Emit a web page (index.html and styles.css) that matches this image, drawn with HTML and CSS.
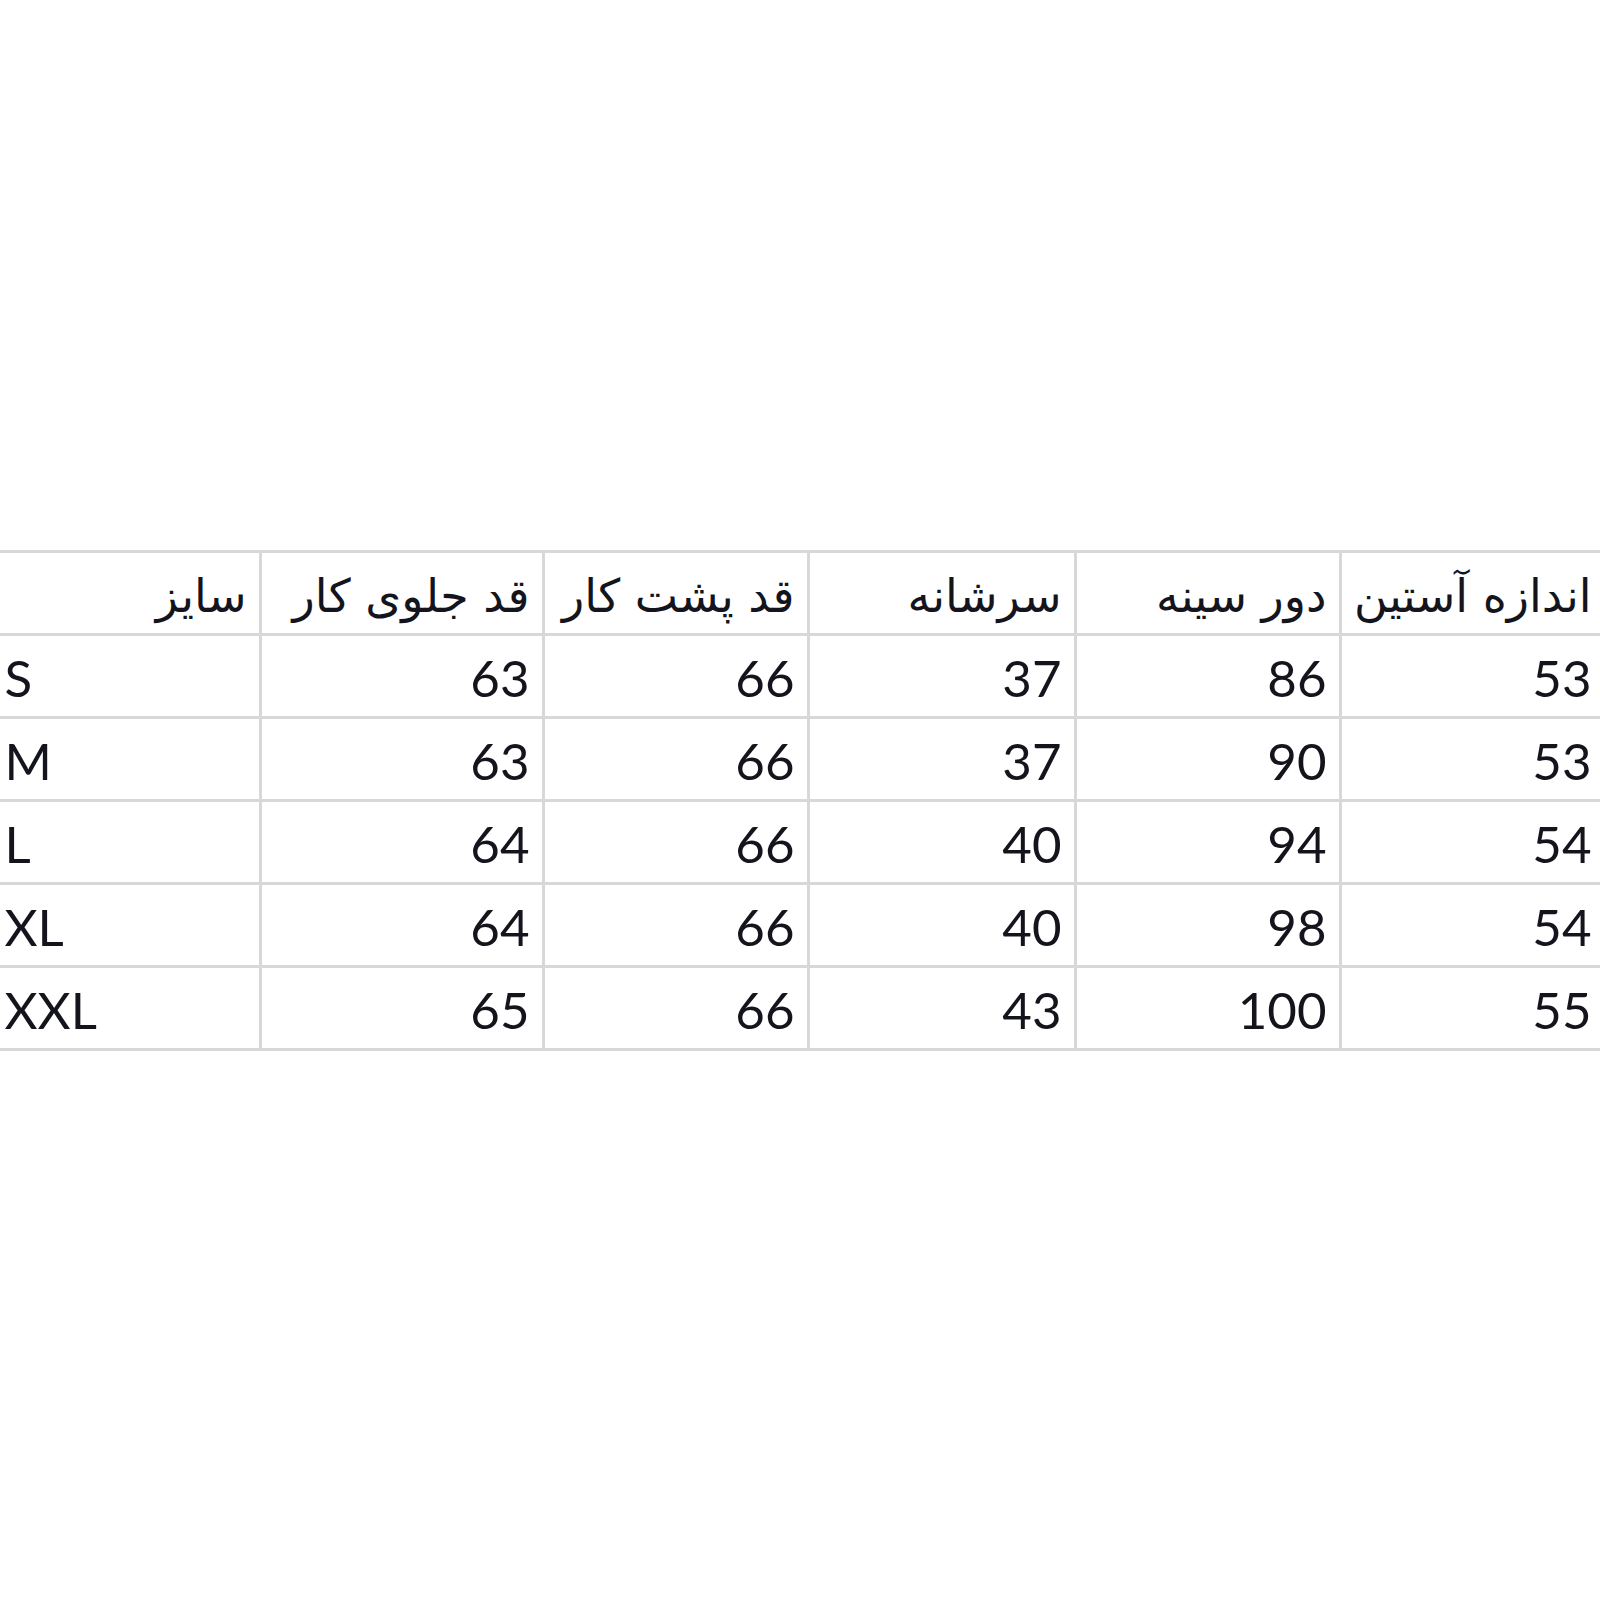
FILE: index.html
```html
<!DOCTYPE html>
<html lang="fa">
<head>
<meta charset="utf-8">
<title>جدول سایز</title>
<link rel="stylesheet" href="styles.css">
</head>
<body>
<div class="stage">
  <table class="sizes">
    <colgroup>
      <col class="c1"><col class="c2"><col class="c3"><col class="c4"><col class="c5"><col class="c6">
    </colgroup>
    <tr class="head">
      <td dir="rtl">سایز</td>
      <td dir="rtl">قد جلوی کار</td>
      <td dir="rtl">قد پشت کار</td>
      <td dir="rtl">سرشانه</td>
      <td dir="rtl">دور سینه</td>
      <td dir="rtl">اندازه آستین</td>
    </tr>
    <tr><td class="sz">S</td><td>63</td><td>66</td><td>37</td><td>86</td><td>53</td></tr>
    <tr><td class="sz">M</td><td>63</td><td>66</td><td>37</td><td>90</td><td>53</td></tr>
    <tr><td class="sz">L</td><td>64</td><td>66</td><td>40</td><td>94</td><td>54</td></tr>
    <tr><td class="sz">XL</td><td>64</td><td>66</td><td>40</td><td>98</td><td>54</td></tr>
    <tr><td class="sz">XXL</td><td>65</td><td>66</td><td>43</td><td>100</td><td>55</td></tr>
  </table>
</div>
</body>
</html>
```

FILE: styles.css
```css
html, body {
  margin: 0;
  padding: 0;
  background: #ffffff;
  overflow: hidden;
}

.stage {
  width: 1600px;
  height: 1600px;
  display: flex;
  align-items: center;
  justify-content: center;
}

.sizes {
  flex: none;
  border-collapse: collapse;
  table-layout: fixed;
  width: 1610px;
  font-family: Lato, "DejaVu Sans", sans-serif;
  color: #14141c;
}

.c1 { width: 265px; }
.c2 { width: 283px; }
.c3 { width: 265px; }
.c4 { width: 267px; }
.c5 { width: 265px; }
.c6 { width: 265px; }

.sizes td {
  border: 3px solid #d8d8d8;
  height: 83px;
  padding: 0 12px 7px 12px;
  box-sizing: border-box;
  vertical-align: bottom;
  text-align: right;
  font-size: 51px;
  line-height: 62px;
  white-space: nowrap;
  overflow: hidden;
}

.sizes td.sz {
  text-align: left;
  padding-left: 8px;
}

.sizes .head td {
  font-family: "DejaVu Sans", sans-serif;
  font-size: 46px;
  line-height: 64px;
  padding-bottom: 5px;
}
```
